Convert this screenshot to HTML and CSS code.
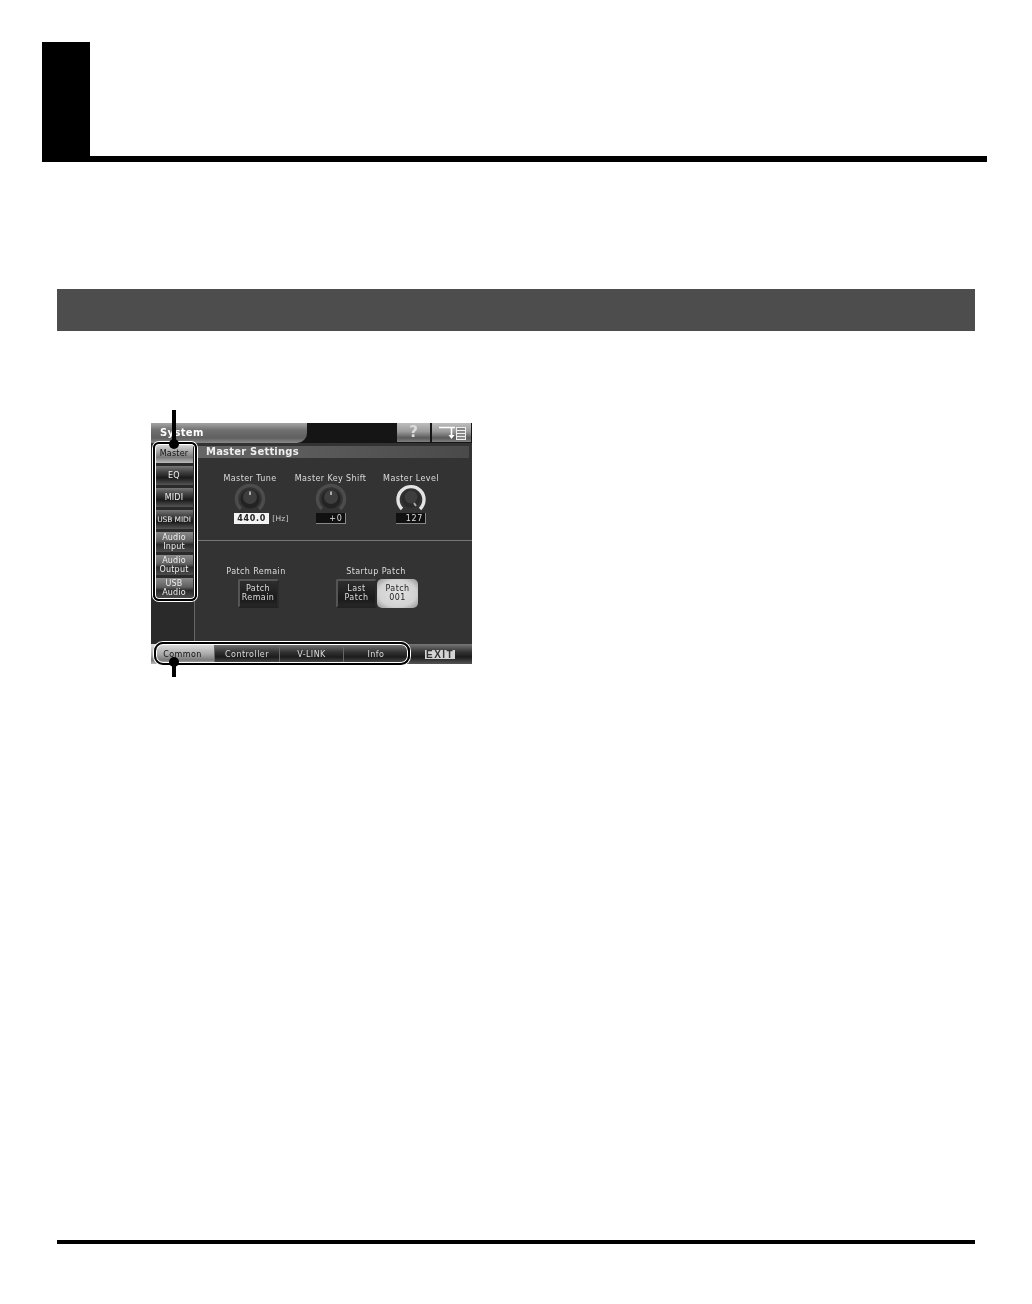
FILE: index.html
```html
<!DOCTYPE html>
<html lang="en">
<head>
<meta charset="utf-8">
<title>System</title>
<link rel="stylesheet" href="styles.css">
</head>
<body>
<header class="chapter"><div class="chapter-block"></div></header>
<div class="band"></div>
<figure class="figure">
  <div class="screen">
    <div class="titlebar">
      <div class="title">System</div>
      <div class="top-buttons">
        <div class="top-btn help">?</div>
        <div class="top-btn list">
          <svg width="28" height="16" viewBox="0 0 28 16">
            <path d="M1 2.5H17M13.5 3V11" stroke="#fff" stroke-width="1.6" fill="none"/>
            <path d="M10.5 10H16.5L13.5 14Z" fill="#fff"/>
            <rect x="18.5" y="2.5" width="9" height="12" fill="#888" stroke="#eee"/>
            <path d="M19 5.5H27M19 8.5H27M19 11.5H27" stroke="#eee"/>
          </svg>
        </div>
      </div>
    </div>
    <div class="content">
      <nav class="side">
        <div class="side-btn active">Master</div>
        <div class="side-btn">EQ</div>
        <div class="side-btn">MIDI</div>
        <div class="side-btn narrow">USB MIDI</div>
        <div class="side-btn two">Audio<br>Input</div>
        <div class="side-btn two">Audio<br>Output</div>
        <div class="side-btn two">USB<br>Audio</div>
      </nav>
      <main class="main">
        <div class="section-bar">Master Settings</div>
        <div class="knobs">
          <div class="knob-col">
            <div class="label">Master Tune</div>
            <svg class="knob" width="34" height="30" viewBox="0 0 34 30">
              <path d="M8 26A13.5 13.5 0 1 1 26 26" fill="none" stroke="#4c4c4c" stroke-width="3.5"/>
              <circle cx="17" cy="16" r="9.5" fill="#232323"/>
              <circle cx="17" cy="14" r="7" fill="#3e3e3e"/>
              <path d="M17 8.5V12" stroke="#aaa" stroke-width="2"/>
            </svg>
            <div class="value-row">
              <span class="value white">440.0</span><span class="unit">[Hz]</span>
            </div>
          </div>
          <div class="knob-col">
            <div class="label">Master Key Shift</div>
            <svg class="knob" width="34" height="30" viewBox="0 0 34 30">
              <path d="M8 26A13.5 13.5 0 1 1 26 26" fill="none" stroke="#4c4c4c" stroke-width="3.5"/>
              <circle cx="17" cy="16" r="9.5" fill="#232323"/>
              <circle cx="17" cy="14" r="7" fill="#3e3e3e"/>
              <path d="M17 8.5V12" stroke="#aaa" stroke-width="2"/>
            </svg>
            <div class="value-row"><span class="value dark">+0</span></div>
          </div>
          <div class="knob-col">
            <div class="label">Master Level</div>
            <svg class="knob" width="34" height="30" viewBox="0 0 34 30">
              <path d="M8 26A13 13 0 1 1 26 26" fill="none" stroke="#e4e4e4" stroke-width="3.4"/>
              <circle cx="17" cy="16" r="9" fill="#2a2a2a"/>
              <circle cx="17" cy="14" r="6.5" fill="#3e3e3e"/>
              <path d="M20 20L22 23" stroke="#aaa" stroke-width="2"/>
            </svg>
            <div class="value-row"><span class="value dark">127</span></div>
          </div>
        </div>
        <div class="lower">
          <div class="group remain">
            <div class="label">Patch Remain</div>
            <div class="patch-btn dark-btn">Patch<br>Remain</div>
          </div>
          <div class="group startup">
            <div class="label">Startup Patch</div>
            <div class="pair">
              <div class="patch-btn dark-btn">Last<br>Patch</div>
              <div class="patch-btn light-btn">Patch<br>001</div>
            </div>
          </div>
        </div>
      </main>
    </div>
    <div class="tabs">
      <div class="tab active common">Common</div>
      <div class="tab controller">Controller</div>
      <div class="tab vlink">V-LINK</div>
      <div class="tab info">Info</div>
      <div class="exit-wrap"><span class="exit">EXIT</span></div>
    </div>
  </div>
  <div class="callout callout-side"></div>
  <div class="callout callout-tabs"></div>
  <div class="lead lead-top"></div>
  <div class="dot dot-top"></div>
  <div class="lead lead-bottom"></div>
  <div class="dot dot-bottom"></div>
</figure>
<div class="footer-rule"></div>
</body>
</html>
```
FILE: styles.css
```css
html, body { margin: 0; padding: 0; background: #fff; }
body { width: 1032px; height: 1304px; overflow: hidden; font-family: "DejaVu Sans", sans-serif; }

.chapter { box-sizing: border-box; margin: 42px 0 0 42px; width: 945px; height: 120px; border-bottom: 6px solid #000; }
.chapter-block { width: 48px; height: 114px; background: #000; }

.band { margin: 127px 0 0 57px; width: 918px; height: 42px; background: #4d4d4d; }

.figure { position: relative; margin: 92px 0 0 151px; width: 321px; height: 241px; }
.screen { width: 321px; height: 241px; background: #333; color: #e8e8e8; display: flex; flex-direction: column; filter: blur(0.5px); font-size: 8px; line-height: 9px; }

.titlebar { display: flex; justify-content: space-between; height: 20px; background: #151515; flex: none; }
.title { box-sizing: border-box; width: 156px; height: 20px; padding: 5px 0 0 9px; border-radius: 0 0 10px 0; background: linear-gradient(#a5a5a5, #707070 35%, #606060 75%, #8a8a8a); font-size: 10px; font-weight: bold; color: #fff; letter-spacing: 0.35px; }
.top-buttons { display: flex; gap: 2px; padding-right: 1px; }
.top-btn { height: 19px; display: flex; align-items: center; justify-content: center; background: linear-gradient(#bdbdbd, #9a9a9a 45%, #5a5a5a 78%, #808080); }
.help { width: 33px; font-size: 15px; font-weight: bold; color: #dcdcdc; }
.list { width: 39px; }

.content { flex: 1; display: flex; min-height: 0; }
.side { box-sizing: border-box; width: 44px; flex: none; padding: 1px 0 0 4px; display: flex; flex-direction: column; gap: 3px; background: #2a2a2a; border-right: 1px solid #666; }
.side-btn { width: 38px; height: 19px; display: flex; align-items: center; justify-content: center; text-align: center; background: linear-gradient(#777, #444 30%, #1a1a1a 62%, #555); color: #eee; font-size: 8px; line-height: 9px; letter-spacing: 0.2px; white-space: nowrap; }
.side-btn.narrow { font-size: 7.5px; letter-spacing: -0.1px; }
.side-btn.two { height: 20px; background: linear-gradient(#8a8a8a, #606060 45%, #2a2a2a 62%, #4c4c4c); }
.side-btn.active { background: linear-gradient(#ddd, #a5a5a5 40%, #7a7a7a 70%, #bbb); color: #111; }

.main { flex: 1; min-width: 0; display: flex; flex-direction: column; background: #333; }
.section-bar { box-sizing: border-box; margin: 3px 3px 0 1px; height: 12px; padding-left: 10px; line-height: 12px; background: linear-gradient(90deg, #666, #4a4a4a); font-size: 10px; font-weight: bold; color: #eee; letter-spacing: 0.2px; }

.knobs { display: grid; grid-template-columns: 80px 81px 80px; padding: 16px 0 0 15px; height: 66px; flex: none; border-bottom: 1px solid #777; }
.knob-col { display: flex; flex-direction: column; align-items: center; }
.label { white-space: nowrap; font-size: 8px; line-height: 9px; color: #ddd; letter-spacing: 0.4px; }
.knob { display: block; }
.value-row { display: flex; align-items: center; gap: 3px; height: 11px; }
.knob-col:first-child .value-row { margin-left: 23px; }
.value { box-sizing: border-box; width: 30px; height: 11px; line-height: 11px; text-align: right; padding-right: 2px; font-size: 8px; letter-spacing: 0.7px; }
.value.white { width: 35px; background: #f4f4f4; color: #222; text-align: center; padding: 0; font-weight: bold; }
.value.dark { background: #111; color: #ddd; border-right: 1px solid #888; border-bottom: 1px solid #888; }
.unit { font-size: 7.5px; color: #ccc; letter-spacing: 0.3px; }

.lower { display: flex; padding: 26px 0 0 17px; }
.group { display: flex; flex-direction: column; align-items: center; gap: 3px; }
.remain { width: 88px; }
.remain .patch-btn { margin-left: 4px; }
.startup { margin-left: 35px; width: 82px; }
.pair { display: flex; margin-left: 2px; }
.patch-btn { box-sizing: border-box; width: 41px; height: 29px; padding-bottom: 2px; display: flex; align-items: center; justify-content: center; text-align: center; font-size: 8px; line-height: 9px; border-radius: 2px; letter-spacing: 0.4px; }
.dark-btn { background: linear-gradient(#2e2e2e, #1a1a1a 70%, #262626); border: 2px solid #555; border-right-color: #2a2a2a; border-bottom-color: #222; color: #ddd; }
.light-btn { background: radial-gradient(#e2e2e2, #d2d2d2 65%, #8f8f8f); color: #222; border-radius: 5px; }

.tabs { flex: none; height: 20px; display: flex; }
.tab { height: 20px; display: flex; align-items: center; justify-content: center; background: linear-gradient(#777, #333 40%, #1c1c1c 65%, #555); color: #ddd; border-right: 1px solid #666; font-size: 8px; letter-spacing: 0.45px; }
.tab.active { background: linear-gradient(#ddd, #aaa 50%, #7a7a7a 80%, #bbb); color: #111; }
.common { width: 63px; }
.controller { width: 64px; }
.vlink { width: 63px; }
.info { width: 64px; }
.exit-wrap { flex: 1; display: flex; align-items: center; justify-content: center; padding-right: 1px; background: linear-gradient(#777, #333 40%, #1c1c1c 65%, #555); }
.exit { background: #d4d4d4; color: #333; font-family: "Liberation Sans", sans-serif; font-weight: bold; font-size: 10px; line-height: 9px; padding: 0 1px; letter-spacing: 1.4px; }

.callout { position: absolute; box-sizing: border-box; border: 2px solid #000; border-radius: 6px; box-shadow: 0 0 0 1px #fff, inset 0 0 0 1px #fff; }
.callout-side { left: 2px; top: 19px; width: 44px; height: 159px; }
.callout-tabs { left: 3px; top: 219px; width: 256px; height: 23px; border-radius: 9px; }
.lead { position: absolute; left: 21px; width: 4px; background: #000; }
.lead-top { top: -13px; height: 34px; }
.lead-bottom { top: 239px; height: 15px; }
.dot { position: absolute; width: 10px; height: 10px; border-radius: 50%; background: #000; left: 18px; }
.dot-top { top: 16px; }
.dot-bottom { top: 234px; }

.footer-rule { margin: 576px 0 0 57px; width: 918px; height: 4px; background: #000; }
```
